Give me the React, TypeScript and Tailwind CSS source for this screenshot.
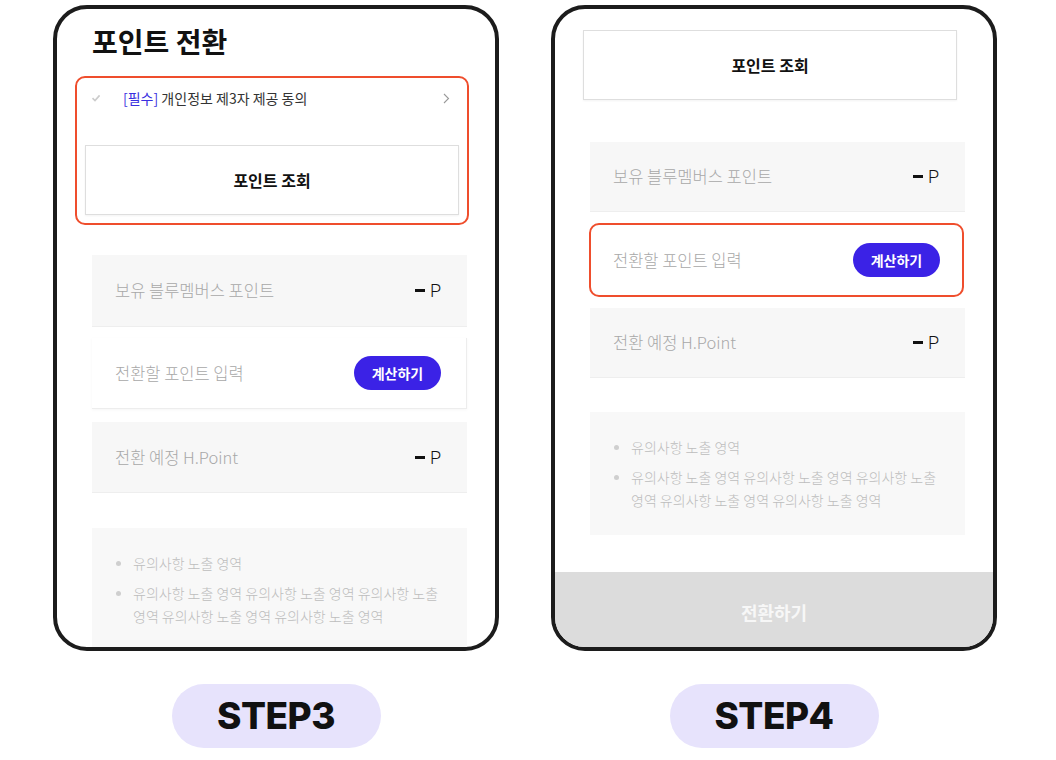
import { ReactNode } from 'react';

const KR = { fontFamily: '"Noto Sans CJK KR", "Noto Sans", sans-serif' };

const PhoneFrame = ({ children }: { children: ReactNode }) => (
  <div className="w-[446px] h-[646px] border-4 border-[#1c1c1c] rounded-[34px] overflow-hidden bg-white flex flex-col">
    {children}
  </div>
);

const StepPill = ({ label }: { label: string }) => (
  <div className="mt-[33px] w-[209px] h-[64px] rounded-full bg-[#e7e3fc] flex items-center justify-center">
    <span
      className="text-[37px] font-extrabold text-[#111] tracking-[-0.5px]"
      style={{ fontFamily: 'Inter, "Liberation Sans", sans-serif' }}
    >
      {label}
    </span>
  </div>
);

const Dash = () => (
  <span className="flex items-center gap-[5px] text-[18px] text-[#111]">
    <span className="block w-[10px] h-[3px] bg-[#111]" />
    <span className="font-light" style={{ fontFamily: 'Roboto, sans-serif' }}>P</span>
  </span>
);

const InfoRow = ({ label, h, className = '' }: { label: string; h: string; className?: string }) => (
  <div
    className={`w-[375px] shrink-0 bg-[#f7f7f7] border-b border-[#eeeeee] flex items-center justify-between pl-[23px] pr-[26px] ${h} ${className}`}
  >
    <span className="text-[16.5px] font-light text-[#a8a8a8]">{label}</span>
    <Dash />
  </div>
);

const CalcButton = () => (
  <button className="w-[87px] h-[34px] rounded-full bg-[#3b22e6] text-white text-[14px] font-bold">
    계산하기
  </button>
);

const LookupButton = ({ className = '' }: { className?: string }) => (
  <div
    className={`w-[374px] h-[70px] shrink-0 border border-[#dedede] bg-white shadow-[0_1px_2px_rgba(0,0,0,0.05)] flex items-center justify-center ${className}`}
  >
    <span className="text-[16px] font-bold text-[#111]">포인트 조회</span>
  </div>
);

const Notice = ({ className = '' }: { className?: string }) => (
  <div className={`w-[375px] h-[123px] shrink-0 bg-[#f8f8f8] pt-[24px] pl-[24px] ${className}`}>
    <ul className="flex flex-col gap-[7px] text-[14px] leading-[23px] font-light text-[#bdbdbd]">
      <li className="flex">
        <span className="w-[17px] flex items-center shrink-0">
          <span className="block w-[5px] h-[5px] rounded-full bg-[#cfcfcf]" />
        </span>
        <span>유의사항 노출 영역</span>
      </li>
      <li className="flex">
        <span className="w-[17px] h-[23px] flex items-center shrink-0">
          <span className="block w-[5px] h-[5px] rounded-full bg-[#cfcfcf]" />
        </span>
        <span className="w-[318px]">
          유의사항 노출 영역 유의사항 노출 영역 유의사항 노출 영역 유의사항 노출 영역 유의사항 노출 영역
        </span>
      </li>
    </ul>
  </div>
);

const StepThree = () => (
  <PhoneFrame>
    <h1 className="mt-[15px] ml-[35px] text-[28px] leading-[34px] font-bold text-[#111] shrink-0">포인트 전환</h1>
    <div className="mt-[18px] ml-[18px] w-[394px] h-[149px] shrink-0 border-2 border-[#ef4e2d] rounded-[10px] flex flex-col">
      <div className="h-[40px] shrink-0 flex items-center pl-[14px] pr-[17px]">
        <svg width="10" height="10" viewBox="0 0 10 10" className="shrink-0">
          <path d="M1.5 5.2 L4 7.6 L8.6 2.4" fill="none" stroke="#cccccc" strokeWidth="1.6" />
        </svg>
        <span className="ml-[22px] text-[14px] text-[#333]">
          <span className="text-[#3a2fe0]">[필수]</span> 개인정보 제3자 제공 동의
        </span>
        <svg width="7" height="11" viewBox="0 0 7 11" className="ml-auto">
          <path d="M1 1 L5.5 5.5 L1 10" fill="none" stroke="#9a9a9a" strokeWidth="1.1" />
        </svg>
      </div>
      <LookupButton className="mt-[27px] ml-[8px]" />
    </div>
    <InfoRow label="보유 블루멤버스 포인트" h="h-[72px]" className="mt-[30px] ml-[35px]" />
    <div className="mt-[11px] ml-[35px] w-[375px] h-[71px] shrink-0 bg-white border-b border-r border-[#ededed] shadow-[0_1px_3px_rgba(0,0,0,0.04)] flex items-center justify-between pl-[23px] pr-[25px]">
      <span className="text-[16.5px] font-light text-[#a8a8a8]">전환할 포인트 입력</span>
      <CalcButton />
    </div>
    <InfoRow label="전환 예정 H.Point" h="h-[71px]" className="mt-[13px] ml-[35px]" />
    <Notice className="mt-[35px] ml-[35px]" />
  </PhoneFrame>
);

const StepFour = () => (
  <PhoneFrame>
    <LookupButton className="mt-[21px] ml-[28px]" />
    <InfoRow label="보유 블루멤버스 포인트" h="h-[70px]" className="mt-[42px] ml-[35px]" />
    <div className="mt-[11px] ml-[34px] w-[375px] h-[74px] shrink-0 border-2 border-[#ef4e2d] rounded-[10px] bg-white flex items-center justify-between pl-[22px] pr-[22px]">
      <span className="text-[16.5px] font-light text-[#a8a8a8]">전환할 포인트 입력</span>
      <CalcButton />
    </div>
    <InfoRow label="전환 예정 H.Point" h="h-[70px]" className="mt-[11px] ml-[35px]" />
    <Notice className="mt-[34px] ml-[35px]" />
    <div className="mt-auto h-[75px] shrink-0 bg-[#dcdcdc] flex items-center justify-center pt-[6px]">
      <span className="text-[18px] font-bold text-[#f7f7f7]">전환하기</span>
    </div>
  </PhoneFrame>
);

export default function App() {
  return (
    <div className="w-[1056px] h-[760px] bg-white pt-[5px] pl-[53px] flex gap-[52px]" style={KR}>
      <div className="flex flex-col items-center">
        <StepThree />
        <StepPill label="STEP3" />
      </div>
      <div className="flex flex-col items-center">
        <StepFour />
        <StepPill label="STEP4" />
      </div>
    </div>
  );
}
